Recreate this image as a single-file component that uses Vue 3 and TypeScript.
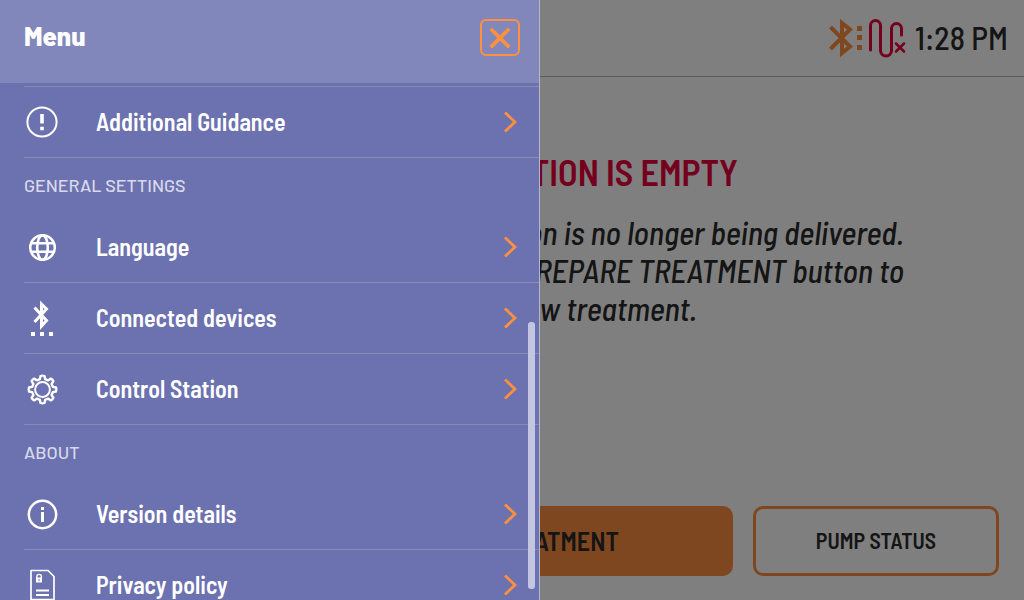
<script setup lang="ts">
import { ref } from 'vue'

type IconName = 'alert' | 'globe' | 'bluetooth' | 'gear' | 'info' | 'policy'

interface MenuItem {
  label: string
  icon: IconName
}

interface MenuSection {
  title: string
  items: MenuItem[]
}

const sections: MenuSection[] = [
  { title: '', items: [{ label: 'Additional Guidance', icon: 'alert' }] },
  {
    title: 'GENERAL SETTINGS',
    items: [
      { label: 'Language', icon: 'globe' },
      { label: 'Connected devices', icon: 'bluetooth' },
      { label: 'Control Station', icon: 'gear' },
    ],
  },
  {
    title: 'ABOUT',
    items: [
      { label: 'Version details', icon: 'info' },
      { label: 'Privacy policy', icon: 'policy' },
    ],
  },
]

const menuOpen = ref(true)
</script>

<template>
  <div class="app">
    <div class="screen">
      <header class="topbar">
        <svg class="status-bt" width="36" height="40" viewBox="0 0 36 40" aria-hidden="true">
          <path d="M3.500 9 L23 28.500 L15 35 V5 L23 11.500 L3.500 31" fill="none" stroke="#ff8f40" stroke-width="4" />
          <path d="M30 8h5v5h-5zM30 17h5v5h-5zM30 27h5v5h-5z" fill="#ff8f40" />
        </svg>
        <svg class="status-tube" width="40" height="40" viewBox="0 0 40 40" aria-hidden="true">
          <g fill="none" stroke="#e8003c" stroke-width="3" stroke-linecap="round">
            <path d="M3.500 32V7.500a5 5 0 0 1 10 0V32.500a5.500 5.500 0 0 0 11 0V10.500a5 5 0 0 1 10 0V17" />
            <path d="M29 25.500l8 8M37 25.500l-8 8" stroke-width="2.500" />
          </g>
        </svg>
        <time class="clock">1:28 PM</time>
      </header>

      <main class="message">
        <h1>MEDICATION IS EMPTY</h1>
        <p>
          <span>Medication is no longer being delivered.</span>
          <span>Press the PREPARE TREATMENT button to</span>
          <span class="last">start a new treatment.</span>
        </p>
      </main>

      <footer class="actions">
        <button class="primary" type="button">PREPARE TREATMENT</button>
        <button class="secondary" type="button">PUMP STATUS</button>
      </footer>
    </div>

    <template v-if="menuOpen">
      <div class="scrim" @click="menuOpen = false"></div>
      <aside class="drawer" aria-label="Menu">
        <header class="drawer-head">
          <h2>Menu</h2>
          <button class="close" type="button" aria-label="Close menu" @click="menuOpen = false">
            <svg width="20" height="20" viewBox="0 0 20 20" aria-hidden="true">
              <path d="M2 2l16 16M18 2l-16 16" stroke="#ff9040" stroke-width="3.800" stroke-linecap="square" stroke-linejoin="round" />
            </svg>
          </button>
        </header>

        <nav class="list">
          <section v-for="section in sections" :key="section.title">
            <h3 v-if="section.title">{{ section.title }}</h3>
            <button v-for="item in section.items" :key="item.label" class="row" type="button">
              <svg class="icon" width="36" height="36" viewBox="0 0 36 36" fill="none" stroke="#fff" aria-hidden="true">
                <template v-if="item.icon === 'alert'">
                  <circle cx="18" cy="18" r="14.600" stroke-width="2" />
                  <path d="M18 10v9.500M18 22.800v3.400" stroke-width="3.600" />
                </template>
                <template v-else-if="item.icon === 'globe'">
                  <g stroke-width="2.600">
                    <circle cx="18.500" cy="18.500" r="12.300" />
                    <ellipse cx="18.500" cy="18.500" rx="5.300" ry="12.300" />
                    <path d="M7 14.300h23M7 22.700h23" />
                  </g>
                </template>
                <template v-else-if="item.icon === 'bluetooth'">
                  <path d="M10.500 7.500L22.500 20.500L17.500 26V4L22.500 9L10.500 22" stroke-width="3" />
                  <path d="M7 32h4v4h-4zM16 32h4v4h-4zM25 32h4v4h-4z" fill="#fff" stroke="none" />
                </template>
                <template v-else-if="item.icon === 'gear'">
                  <circle cx="18.500" cy="18.500" r="7.400" stroke-width="2" />
                  <path
                    d="M16.500 5Q18.500 4.200 20.500 5L21.200 8.200L24 9.400L26.800 7.600Q28.600 8.400 29.400 10.200L27.600 13L28.800 15.800L32 16.500Q32.800 18.500 32 20.500L28.800 21.200L27.600 24L29.400 26.800Q28.600 28.600 26.800 29.400L24 27.600L21.200 28.800L20.500 32Q18.500 32.800 16.500 32L15.800 28.800L13 27.600L10.200 29.400Q8.400 28.600 7.600 26.800L9.400 24L8.200 21.200L5 20.500Q4.200 18.500 5 16.500L8.200 15.800L9.400 13L7.600 10.200Q8.400 8.400 10.200 7.600L13 9.400L15.800 8.200Z"
                    stroke-width="2.400" stroke-linejoin="round"
                  />
                </template>
                <template v-else-if="item.icon === 'info'">
                  <circle cx="18.500" cy="18.500" r="13.700" stroke-width="2.500" />
                  <path d="M18.500 11v3M17 17.500h1.500M18.500 16v10" stroke-width="3" />
                </template>
                <template v-else>
                  <path d="M7 3.500h17l6 6v23h-23z" stroke-width="1.700" stroke-linejoin="round" />
                  <path d="M12.800 11v-1.300a2.300 2.300 0 0 1 4.600 0V11" stroke-width="1.400" />
                  <path d="M12 10.500h6v5h-6z" fill="#fff" stroke="none" />
                  <path d="M15 12v2" stroke="#6c71af" />
                  <path d="M12 23.500h13M12 28h13" stroke-width="2" />
                </template>
              </svg>
              <span class="label">{{ item.label }}</span>
              <svg class="chevron" width="14" height="22" viewBox="0 0 14 22" fill="none" aria-hidden="true">
                <path d="M2 1.500L12 11L2 20.500" stroke="#ff9040" stroke-width="2.800" />
              </svg>
            </button>
          </section>
        </nav>
        <div class="thumb"></div>
      </aside>
    </template>
  </div>
</template>

<style>
html,
body {
  margin: 0;
  overflow: hidden;
}
</style>

<style scoped>
.app {
  position: relative;
  height: 100vh;
  overflow: hidden;
  font-family: "Barlow Semi Condensed", "Roboto Condensed", Roboto, sans-serif;
  color: #2b2b2b;
}
h1,
h2,
h3,
p {
  margin: 0;
}
button {
  font-family: inherit;
  color: inherit;
  cursor: pointer;
}
.screen {
  display: flex;
  flex-direction: column;
  height: 100%;
  background: #fff;
}
.topbar {
  display: flex;
  align-items: center;
  justify-content: flex-end;
  height: 76px;
  padding-right: 16px;
  border-bottom: 1px solid #b4b4b4;
}
.status-tube {
  margin: 0 8px 0 4px;
}
.clock {
  font-size: 32px;
  line-height: 36px;
  padding-bottom: 2px;
  font-weight: 500;
}
.message {
  flex: 1;
  padding: 75px 120px 0 0;
  text-align: right;
}
h1 {
  padding-right: 166px;
  font-size: 36px;
  line-height: 40px;
  font-weight: 600;
  color: #e8003c;
}
.message p {
  margin-top: 21px;
  font-size: 32px;
  line-height: 38px;
  font-weight: 500;
  font-style: italic;
}
.message span {
  display: block;
}
.message .last {
  padding-right: 207px;
}
.actions {
  display: grid;
  grid-template-columns: 1fr 246px;
  gap: 20px;
  padding: 0 25px 24px 279px;
}
.actions button {
  height: 70px;
  padding-bottom: 3px;
  border: 3px solid #ff8f40;
  border-radius: 10px;
  font-weight: 600;
  white-space: nowrap;
}
.actions .primary {
  background: #ff8f40;
  font-size: 26px;
}
.actions .secondary {
  background: transparent;
  font-size: 22px;
}
.scrim {
  position: absolute;
  inset: 0;
  background: rgba(0, 0, 0, 0.5);
}
.drawer {
  position: absolute;
  inset: 0 auto 0 0;
  display: flex;
  flex-direction: column;
  box-sizing: border-box;
  width: 540px;
  max-width: 100%;
  border-right: 1px solid #b5b7cb;
  background: #6c71af;
  color: #fff;
}
.drawer-head {
  display: flex;
  align-items: center;
  justify-content: space-between;
  box-sizing: border-box;
  height: 83px;
  padding: 0 19px 8px 24px;
  background: #8287bb;
}
h2 {
  padding-bottom: 4px;
  font-family: Barlow, Roboto, sans-serif;
  font-size: 26px;
  font-weight: 800;
}
.close {
  display: grid;
  place-items: center;
  width: 40px;
  height: 37px;
  padding: 0;
  border: 2px solid #ff9040;
  border-radius: 6px;
  background: transparent;
}
.list {
  flex: 1;
  min-height: 0;
  margin: 3px 0 0 24px;
  border-top: 1px solid #898cb2;
  overflow: hidden;
}
h3 {
  font-family: Barlow, Roboto, sans-serif;
  font-size: 18px;
  font-weight: 500;
  line-height: 54px;
  color: #d8d9eb;
}
.row {
  display: flex;
  align-items: center;
  width: 100%;
  height: 71px;
  padding: 0 22px 0 0;
  border: 0;
  border-bottom: 1px solid #898cb2;
  background: transparent;
  text-align: left;
}
.label {
  flex: 1;
  margin-left: 36px;
  padding-bottom: 2px;
  font-size: 24px;
  font-weight: 600;
}
.thumb {
  position: absolute;
  right: 4px;
  top: 322px;
  bottom: 11px;
  width: 7px;
  border-radius: 3px;
  background: #c4c5e0;
}
</style>
